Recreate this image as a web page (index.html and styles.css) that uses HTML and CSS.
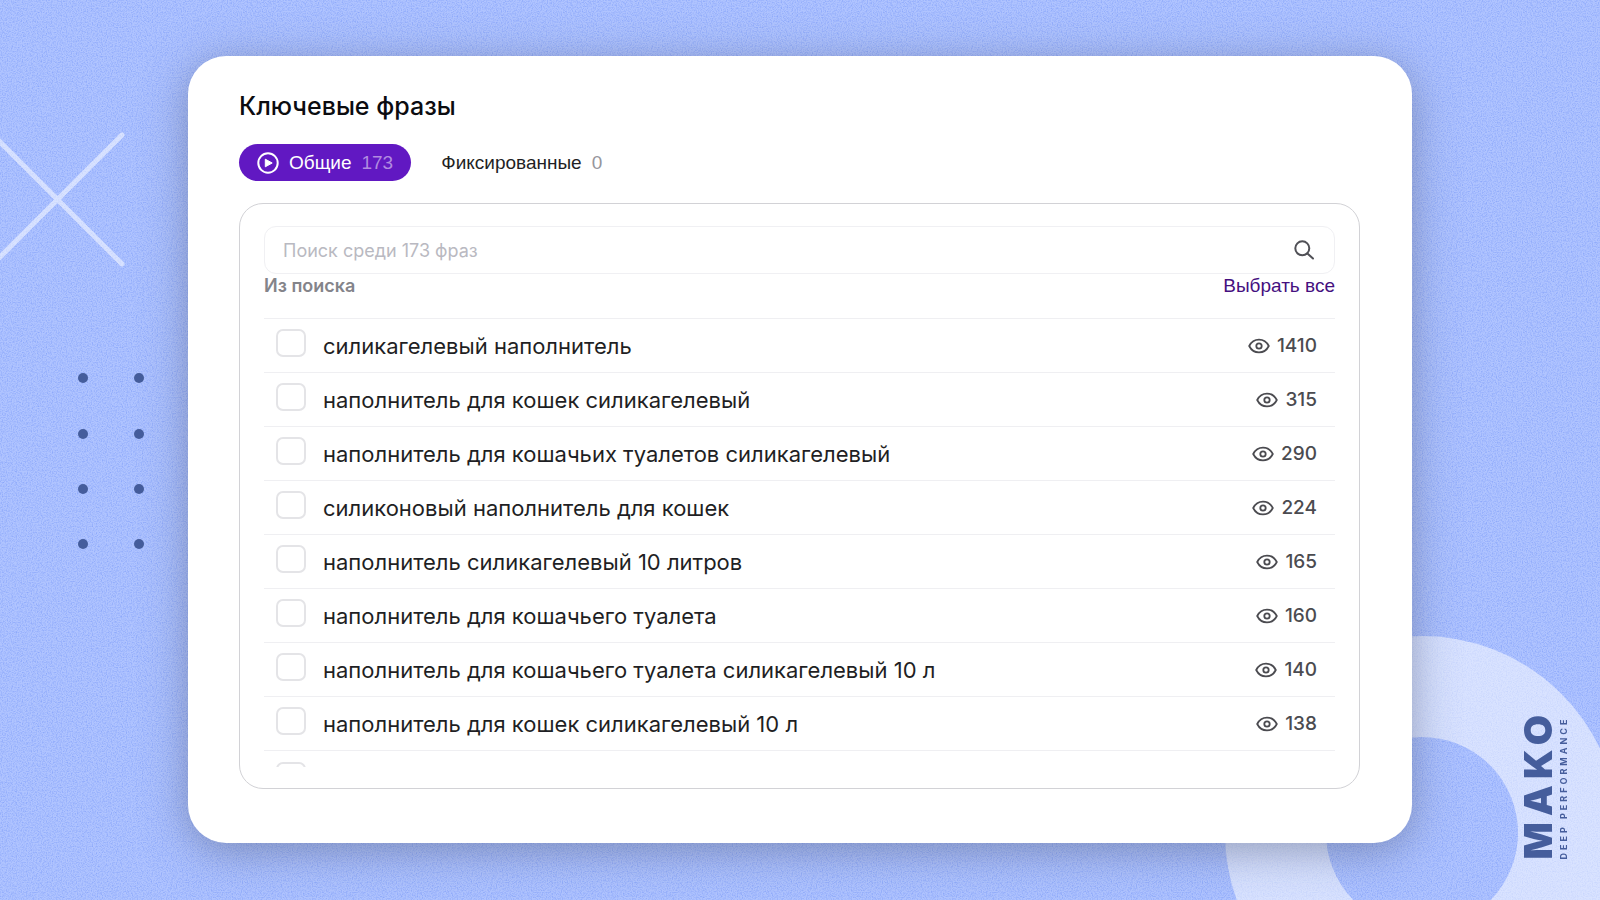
FILE: index.html
```html
<!DOCTYPE html>
<html lang="ru">
<head>
<meta charset="utf-8">
<title>Ключевые фразы</title>
<link rel="stylesheet" href="styles.css">
</head>
<body>
<svg class="symbols" aria-hidden="true">
  <symbol id="eye" viewBox="0 0 22 16">
    <path d="M1.2 8C3.2 4 6.8 1.6 11 1.6S18.800 4 20.800 8C18.800 12 15.200 14.400 11 14.400S3.200 12 1.200 8Z" fill="none" stroke="currentColor" stroke-width="1.800" stroke-linejoin="round"/>
    <circle cx="11" cy="8" r="2.700" fill="none" stroke="currentColor" stroke-width="1.800"/>
  </symbol>
</svg>
<div class="page">
  <svg class="grain" aria-hidden="true">
    <filter id="noise" x="0" y="0" width="100%" height="100%" color-interpolation-filters="sRGB">
      <feTurbulence type="fractalNoise" baseFrequency="0.8" numOctaves="2" seed="4"/>
      <feColorMatrix values="0 0 0 0 0.4  0 0 0 0 0.54  0 0 0 0 0.96  1 0 0 0 -0.390"/>
    </filter>
    <rect width="100%" height="100%" filter="url(#noise)"/>
  </svg>
  <svg class="cross" viewBox="0 0 130 140" aria-hidden="true">
    <path d="M-6 7 L122 135 M122 6 L-6 134"/>
  </svg>
  <svg class="dots" viewBox="0 0 70 180" aria-hidden="true">
    <circle cx="7" cy="7" r="5"/><circle cx="63" cy="7" r="5"/>
    <circle cx="7" cy="63" r="5"/><circle cx="63" cy="63" r="5"/>
    <circle cx="7" cy="118" r="5"/><circle cx="63" cy="118" r="5"/>
    <circle cx="7" cy="173" r="5"/><circle cx="63" cy="173" r="5"/>
  </svg>
  <div class="ring"></div>
  <div class="logo">
    <span class="logo-name">MAKO</span>
    <span class="logo-tag">DEEP PERFORMANCE</span>
  </div>

  <main class="card">
    <h1 class="title">Ключевые фразы</h1>
    <div class="tabs">
      <button class="tab tab-active" type="button">
        <svg class="play" viewBox="0 0 22 22" aria-hidden="true">
          <circle cx="11" cy="11" r="9.700" fill="none" stroke="currentColor" stroke-width="2"/>
          <path d="M8.300 7.200V14.800L15.200 11Z" fill="currentColor" stroke="currentColor" stroke-linejoin="round"/>
        </svg>
        <span>Общие</span><span class="tab-count">173</span>
      </button>
      <button class="tab" type="button"><span>Фиксированные</span><span class="tab-count">0</span></button>
    </div>
    <section class="panel">
      <div class="search">
        <input class="search-input" type="text" placeholder="Поиск среди 173 фраз" aria-label="Поиск среди 173 фраз">
        <svg class="search-icon" viewBox="0 0 20 20" aria-hidden="true">
          <circle cx="8.300" cy="8.300" r="7" /><path d="M13.400 13.400L19 18.500"/>
        </svg>
      </div>
      <div class="list-head">
        <h2 class="list-title">Из поиска</h2>
        <button class="select-all" type="button">Выбрать все</button>
      </div>
      <ul class="list">
        <li class="row"><label class="phrase"><input class="check" type="checkbox"><span class="text">силикагелевый наполнитель</span></label><span class="views"><svg class="eye"><use href="#eye"/></svg>1410</span></li>
        <li class="row"><label class="phrase"><input class="check" type="checkbox"><span class="text">наполнитель для кошек силикагелевый</span></label><span class="views"><svg class="eye"><use href="#eye"/></svg>315</span></li>
        <li class="row"><label class="phrase"><input class="check" type="checkbox"><span class="text">наполнитель для кошачьих туалетов силикагелевый</span></label><span class="views"><svg class="eye"><use href="#eye"/></svg>290</span></li>
        <li class="row"><label class="phrase"><input class="check" type="checkbox"><span class="text">силиконовый наполнитель для кошек</span></label><span class="views"><svg class="eye"><use href="#eye"/></svg>224</span></li>
        <li class="row"><label class="phrase"><input class="check" type="checkbox"><span class="text">наполнитель силикагелевый 10 литров</span></label><span class="views"><svg class="eye"><use href="#eye"/></svg>165</span></li>
        <li class="row"><label class="phrase"><input class="check" type="checkbox"><span class="text">наполнитель для кошачьего туалета</span></label><span class="views"><svg class="eye"><use href="#eye"/></svg>160</span></li>
        <li class="row"><label class="phrase"><input class="check" type="checkbox"><span class="text">наполнитель для кошачьего туалета силикагелевый 10 л</span></label><span class="views"><svg class="eye"><use href="#eye"/></svg>140</span></li>
        <li class="row"><label class="phrase"><input class="check" type="checkbox"><span class="text">наполнитель для кошек силикагелевый 10 л</span></label><span class="views"><svg class="eye"><use href="#eye"/></svg>138</span></li>
        <li class="row row-cut"><input class="check" type="checkbox" aria-label="Следующая фраза"></li>
      </ul>
    </section>
  </main>
</div>
</body>
</html>
```
FILE: styles.css
```css
* { box-sizing: border-box; }

body {
  margin: 0;
  font-family: Inter, "Noto Sans", sans-serif;
  color: #1f1f24;
}

button, input { font: inherit; color: inherit; }

.symbols { display: none; }

.page {
  position: relative;
  min-height: 100vh;
  padding: 56px 188px;
  overflow: hidden;
  background: #b0c4ff;
}

/* Background decorations */
.grain {
  position: absolute;
  inset: 0;
  width: 100%;
  height: 100%;
}

.cross {
  position: absolute;
  left: 0;
  top: 129px;
  width: 130px;
  height: 140px;
  fill: none;
  stroke: rgba(255, 255, 255, 0.52);
  stroke-width: 5;
  stroke-linecap: round;
}

.dots {
  position: absolute;
  left: 76px;
  top: 371px;
  width: 70px;
  height: 180px;
  fill: #455d9c;
}

.ring {
  position: absolute;
  right: -19px;
  bottom: -130px;
  width: 394px;
  height: 394px;
  border: 101px solid rgba(255, 255, 255, 0.52);
  border-radius: 50%;
}

.logo {
  position: absolute;
  right: 30px;
  bottom: 41px;
  display: flex;
  flex-direction: column;
  writing-mode: vertical-rl;
  transform: rotate(180deg);
  color: #455d9c;
}

.logo-name {
  font: 900 39px/40px Inter, sans-serif;
  letter-spacing: 6px;
}

.logo-tag {
  font: 700 9px/12px Inter, sans-serif;
  letter-spacing: 3px;
}

/* Card */
.card {
  position: relative;
  padding: 34px 52px 54px 51px;
  border-radius: 38px;
  background: #fff;
  box-shadow: 0 8px 44px rgba(80, 90, 120, 0.5);
}

.title {
  margin: 0;
  font-size: 25px;
  line-height: 32px;
  font-weight: 500;
  color: #0c0c10;
}

.tabs {
  display: flex;
  gap: 12px;
  margin-top: 22px;
}

.tab {
  display: flex;
  align-items: center;
  gap: 10px;
  height: 37px;
  padding: 0 18px;
  border: 0;
  border-radius: 19px;
  background: none;
  font-family: "Liberation Sans", Arial, sans-serif;
  font-size: 19px;
}

.tab-active { background: #6118c2; color: #fff; }
.tab-count { color: #96969c; }
.tab-active .tab-count { color: #b18be0; }
.play { width: 22px; height: 22px; }

.panel {
  margin-top: 22px;
  padding: 22px 24px 21px;
  border: 1px solid #d2d2d6;
  border-radius: 24px;
}

.search {
  display: flex;
  align-items: center;
  height: 48px;
  padding: 0 20px 0 18px;
  border: 1px solid #f0f0f3;
  border-radius: 12px;
}

.search-input {
  flex: 1;
  padding: 0;
  border: 0;
  outline: 0;
  background: none;
  font-size: 18px;
}

.search-input::placeholder { color: #b9b9c1; opacity: 1; }

.search-icon {
  width: 20px;
  height: 20px;
  fill: none;
  stroke: #505056;
  stroke-width: 2;
  stroke-linecap: round;
}

.list-head {
  display: flex;
  justify-content: space-between;
  align-items: center;
  height: 44px;
  padding-bottom: 20px;
}

.list-title {
  margin: 0;
  font-size: 18px;
  line-height: 24px;
  font-weight: 600;
  color: #84848a;
}

.select-all {
  padding: 0;
  border: 0;
  background: none;
  font-family: "Liberation Sans", Arial, sans-serif;
  font-size: 19px;
  line-height: 24px;
  color: #45107f;
}

.list { margin: 0; padding: 0; list-style: none; }

.row {
  display: flex;
  justify-content: space-between;
  align-items: center;
  height: 54px;
  padding: 0 18px 0 12px;
  border-top: 1px solid #efeff2;
}

.phrase {
  display: flex;
  align-items: center;
  gap: 17px;
}

.check {
  appearance: none;
  flex: none;
  width: 30px;
  height: 28px;
  margin: 0 0 5px;
  border: 2px solid #e4e4e7;
  border-radius: 7px;
}

.text { font-size: 22px; line-height: 28px; }

.views {
  display: flex;
  align-items: center;
  gap: 7px;
  font-size: 19px;
  line-height: 24px;
  font-weight: 500;
  color: #4b4b50;
}

.eye { width: 22px; height: 16px; }

.row-cut {
  align-items: flex-start;
  height: 17px;
  padding-top: 11px;
  overflow: hidden;
}
```
